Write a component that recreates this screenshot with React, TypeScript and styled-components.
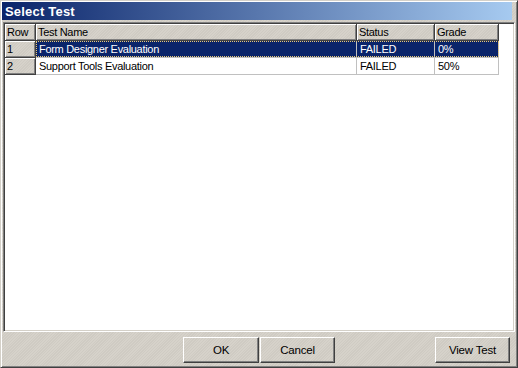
import React from "react";
import styled, { createGlobalStyle, css } from "styled-components";

const Global = createGlobalStyle`
  html, body { margin: 0; padding: 0; background: #d4d0c8; }
  body { width: 518px; height: 368px; overflow: hidden; }
  * { box-sizing: border-box; }
`;

const FONT = `"Liberation Sans", Arial, sans-serif`;
const TEXTURE = `repeating-linear-gradient(135deg, #d6d2ca 0px, #d6d2ca 1px, #cfcbc3 1px, #cfcbc3 2px)`;

const Window = styled.div`
  width: 518px;
  height: 368px;
  display: flex;
  flex-direction: column;
  background: ${TEXTURE};
  border-top: 1px solid #d4d0c8;
  border-left: 1px solid #d4d0c8;
  border-right: 1px solid #404040;
  border-bottom: 1px solid #404040;
  box-shadow: inset 1px 1px #ffffff, inset -1px -1px #808080;
  padding: 1px;
  font-family: ${FONT};
  font-size: 11px;
  letter-spacing: -0.3px;
  color: #000;
`;

const TitleBar = styled.div`
  height: 18px;
  margin-right: 4px;
  display: flex;
  align-items: center;
  padding-left: 3px;
  background: linear-gradient(to right, #0a246a, #a6caf0);
  color: #fff;
  font-weight: bold;
  font-size: 13px;
  letter-spacing: 0.2px;
`;

const Grid = styled.div`
  flex: 1;
  margin: 2px 1px 0 1px;
  background: #fff;
  border-top: 1px solid #808080;
  border-left: 1px solid #808080;
  border-right: 1px solid #fff;
  border-bottom: 1px solid #fff;
  box-shadow: inset 1px 1px #404040, inset -1px -1px #d4d0c8;
  padding: 1px;
  display: flex;
  flex-direction: column;
`;

const Row = styled.div`
  display: flex;
  height: 17px;
`;

const raised = css`
  background: ${TEXTURE};
  border-right: 1px solid #404040;
  border-bottom: 1px solid #404040;
  box-shadow: inset 1px 1px #fff, inset -1px -1px #808080;
`;

const HeaderCell = styled.div<{ $w: number }>`
  ${raised};
  width: ${(p) => p.$w}px;
  flex: none;
  padding: 0 0 0 2px;
  display: flex;
  align-items: center;
  white-space: nowrap;
  overflow: hidden;
`;

const DataGroup = styled.div<{ $selected?: boolean }>`
  position: relative;
  display: flex;
  ${(p) =>
    p.$selected &&
    css`
      &::after {
        content: "";
        position: absolute;
        inset: 0 0 1px 0;
        border: 1px dotted #e8c878;
        pointer-events: none;
      }
    `}
`;

const Cell = styled.div<{ $w: number; $selected?: boolean }>`
  width: ${(p) => p.$w}px;
  flex: none;
  padding: 0 0 0 3px;
  display: flex;
  align-items: center;
  white-space: nowrap;
  overflow: hidden;
  border-right: 1px solid #c0c0c0;
  border-bottom: 1px solid #c0c0c0;
  background: ${(p) => (p.$selected ? "#0a246a" : "#fff")};
  color: ${(p) => (p.$selected ? "#fff" : "#000")};
`;

const ButtonBar = styled.div`
  height: 34px;
  display: flex;
  align-items: flex-start;
  justify-content: flex-end;
  padding: 5px 6px 0 0;
  gap: 1px;
`;

const Button = styled.button<{ $w: number; $gap?: number }>`
  width: ${(p) => p.$w}px;
  height: 26px;
  margin-left: ${(p) => p.$gap ?? 0}px;
  background: ${TEXTURE};
  border-top: 1px solid #fff;
  border-left: 1px solid #fff;
  border-right: 1px solid #404040;
  border-bottom: 1px solid #404040;
  box-shadow: inset -1px -1px #808080;
  font-family: ${FONT};
  font-size: 11.5px;
  color: #000;
  padding: 0;
  letter-spacing: -0.2px;
`;

const cols = [
  { key: "name", title: "Test Name", w: 321 },
  { key: "status", title: "Status", w: 78 },
  { key: "grade", title: "Grade", w: 64 },
] as const;

const data = [
  { name: "Form Designer Evaluation", status: "FAILED", grade: "0%" },
  { name: "Support Tools Evaluation", status: "FAILED", grade: "50%" },
];

export default function App() {
  return (
    <>
      <Global />
      <Window>
        <TitleBar>Select Test</TitleBar>
        <Grid>
          <Row>
            <HeaderCell $w={31}>Row</HeaderCell>
            {cols.map((c) => (
              <HeaderCell key={c.key} $w={c.w}>
                {c.title}
              </HeaderCell>
            ))}
          </Row>
          {data.map((d, i) => (
            <Row key={i}>
              <HeaderCell $w={31}>{i + 1}</HeaderCell>
              <DataGroup $selected={i === 0}>
                {cols.map((c) => (
                  <Cell key={c.key} $w={c.w} $selected={i === 0}>
                    {d[c.key]}
                  </Cell>
                ))}
              </DataGroup>
            </Row>
          ))}
        </Grid>
        <ButtonBar>
          <Button $w={76}>OK</Button>
          <Button $w={75}>Cancel</Button>
          <Button $w={75} $gap={99}>
            View Test
          </Button>
        </ButtonBar>
      </Window>
    </>
  );
}
